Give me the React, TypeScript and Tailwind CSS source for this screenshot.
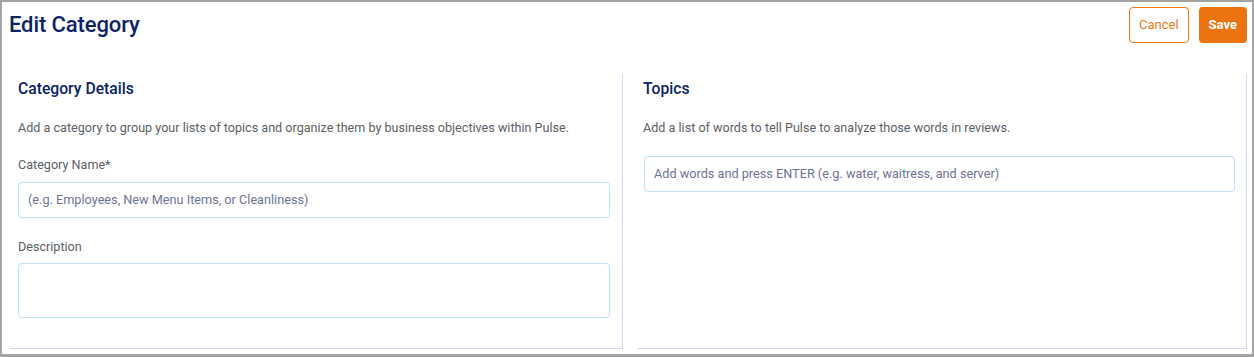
export default function App() {
  return (
    <div
      className="w-[1254px] h-[357px] bg-white border-2 border-b-[3px] border-[#a3a3a3] overflow-hidden"
      style={{ fontFamily: "Roboto, 'Liberation Sans', sans-serif" }}
    >
      {/* Header */}
      <div className="flex items-start justify-between pl-[7px] pr-[5px] pt-[5px]">
        <h1 className="text-[22px] leading-[36px] font-medium text-[#0b2466] tracking-[-0.1px]">
          Edit Category
        </h1>
        <div className="flex gap-[10px]">
          <button className="h-[36px] px-[9px] rounded-[4px] border border-[#ec7a1c] text-[13px] text-[#ec7a1c] bg-white">
            Cancel
          </button>
          <button className="h-[36px] px-[10px] rounded-[4px] bg-[#ec7410] text-[13px] font-bold text-white">
            Save
          </button>
        </div>
      </div>

      {/* Cards */}
      <div className="flex gap-[14px] pl-[8px] pr-[5px] mt-[31px]">
        <section className="w-[613px] h-[275px] border-r border-b border-[#d3d6f7] pl-[8px] pr-[12px] pt-[5px]">
          <h2 className="text-[15.7px] leading-[20px] font-medium text-[#0b2466]">Category Details</h2>
          <p className="mt-[21px] text-[12.6px] leading-[16px] text-[#5b5f66]">
            Add a category to group your lists of topics and organize them by business objectives within Pulse.
          </p>
          <label className="block mt-[21px] text-[12.6px] leading-[16px] text-[#5b5f66]">Category Name*</label>
          <div className="mt-[9px] h-[36px] rounded-[4px] border border-[#bfe0f7] flex items-center px-[9px] text-[12.7px] text-[#6e7393]">
            (e.g. Employees, New Menu Items, or Cleanliness)
          </div>
          <label className="block mt-[21px] text-[12.6px] leading-[16px] text-[#5b5f66]">Description</label>
          <div className="mt-[8px] h-[55px] rounded-[4px] border border-[#bfe0f7]" />
        </section>

        <section className="flex-1 h-[275px] border-r border-b border-[#d3d6f7] pl-[6px] pr-[11px] pt-[5px]">
          <h2 className="text-[15.7px] leading-[20px] font-medium text-[#0b2466]">Topics</h2>
          <p className="mt-[21px] text-[12.6px] leading-[16px] text-[#5b5f66]">
            Add a list of words to tell Pulse to analyze those words in reviews.
          </p>
          <div className="mt-[20px] ml-px h-[36px] rounded-[4px] border border-[#bfe0f7] flex items-center px-[9px] text-[12.7px] text-[#6e7393]">
            Add words and press ENTER (e.g. water, waitress, and server)
          </div>
        </section>
      </div>
    </div>
  );
}
